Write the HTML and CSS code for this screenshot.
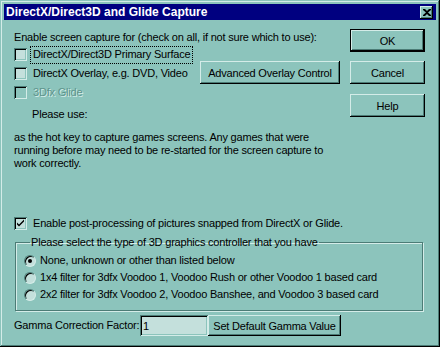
FILE: index.html
```html
<!DOCTYPE html>
<html>
<head>
	<title>DirectX/Direct3D and Glide Capture</title>
	<link rel="stylesheet" href="styles.css">
</head>
<body>
<div class="window">
    <div class="titlebar">
        <span class="title">DirectX/Direct3D and Glide Capture</span>
        <button class="close">
            <svg width="8" height="7" viewBox="0 0 8 7"><path d="M0 0h2l2 2 2-2h2v1l-3 2.5 3 2.5v1h-2l-2-2-2 2h-2v-1l3-2.5-3-2.5z" fill="#000"/></svg>
        </button>
    </div>

    <div class="content">
        <div class="top">
            <div class="main">
                <p class="intro">Enable screen capture for (check on all, if not sure which to use):</p>
                <div class="row">
                    <span class="box"></span>
                    <span class="label focus">DirectX/Direct3D Primary Surface</span>
                </div>
                <div class="row">
                    <span class="box"></span>
                    <span class="label">DirectX Overlay, e.g. DVD, Video</span>
                    <button class="btn advanced">Advanced Overlay Control</button>
                </div>
                <div class="row disabled">
                    <span class="box"></span>
                    <span class="label">3Dfx Glide</span>
                </div>
                <p class="hint">Please use:</p>
            </div>
            <div class="side">
                <button class="btn default">OK</button>
                <button class="btn">Cancel</button>
                <button class="btn help">Help</button>
            </div>
        </div>

        <p class="para">as the hot key to capture games screens. Any games that were<br>running before may need to be re-started for the screen capture to<br>work correctly.</p>

        <div class="row post">
            <span class="box">
                <svg width="9" height="9" viewBox="0 0 9 9"><path d="M1 3.5l2 2 5-5v2l-5 5-2-2z" fill="#000"/></svg>
            </span>
            <span class="label">Enable post-processing of pictures snapped from DirectX or Glide.</span>
        </div>

        <fieldset class="group">
            <legend>Please select the type of 3D graphics controller that you have</legend>
            <div class="radio-row">
                <span class="radio checked"><span class="dot"></span></span>
                <span class="label">None, unknown or other than listed below</span>
            </div>
            <div class="radio-row">
                <span class="radio"></span>
                <span class="label">1x4 filter for 3dfx Voodoo 1, Voodoo Rush or other Voodoo 1 based card</span>
            </div>
            <div class="radio-row">
                <span class="radio"></span>
                <span class="label">2x2 filter for 3dfx Voodoo 2, Voodoo Banshee, and Voodoo 3 based card</span>
            </div>
        </fieldset>

        <div class="gamma">
            <span class="gamma-label">Gamma Correction Factor:</span>
            <input class="field" type="text" value="1">
            <button class="btn gamma-btn">Set Default Gamma Value</button>
        </div>
    </div>
</div>
</body>
</html>
```

FILE: styles.css
```css
* {
	margin: 0;
	padding: 0;
	box-sizing: border-box;
}

body {
	font-family: "Liberation Sans", Arial, sans-serif;
	font-size: 11px;
	letter-spacing: -0.2px;
	line-height: 13px;
	color: #000;
	background: #8cc4bc;
	white-space: nowrap;
}

.window {
	width: 440px;
	height: 347px;
	padding: 4px;
	background: #8cc4bc;
	box-shadow: inset -1px -1px #000, inset 1px 1px #8cc4bc, inset -2px -2px #4c7c76, inset 2px 2px #d4ece8;
}

.titlebar {
	height: 16px;
	background: #000080;
	display: flex;
	align-items: center;
	justify-content: space-between;
	padding: 0 3px 0 2px;
}

.title {
	color: #fff;
	font-weight: bold;
	font-size: 12px;
	letter-spacing: 0;
}

.close {
	width: 13px;
	height: 13px;
	border: none;
	background: #8cc4bc;
	display: flex;
	align-items: center;
	justify-content: center;
	box-shadow: inset -1px -1px #000, inset 1px 1px #d4ece8, inset -2px -2px #4c7c76;
}

.content {
	padding: 9px 11px 0 10px;
}

.top {
	display: flex;
}

.main {
	flex: 1;
	padding-top: 2px;
	margin-right: 10px;
}

.intro {
	height: 14px;
}

.side {
	width: 75px;
	display: flex;
	flex-direction: column;
}

.btn {
	height: 23px;
	border: none;
	background: #8cc4bc;
	font-family: "Liberation Sans", Arial, sans-serif;
	font-size: 11px;
	letter-spacing: -0.2px;
	color: #000;
	box-shadow: inset -1px -1px #000, inset 1px 1px #d4ece8, inset -2px -2px #4c7c76;
}

.side .btn + .btn {
	margin-top: 9px;
}

.side .help {
	margin-top: 10px !important;
}

.btn.default {
	box-shadow: inset -1px -1px #000, inset 1px 1px #000, inset -2px -2px #000, inset 2px 2px #d4ece8, inset -3px -3px #4c7c76;
}

.row {
	height: 19px;
	display: flex;
	align-items: center;
}

.box {
	width: 13px;
	height: 13px;
	flex: none;
	background: #c4e0dc;
	display: flex;
	align-items: center;
	justify-content: center;
	box-shadow: inset 1px 1px #4c7c76, inset -1px -1px #d4ece8, inset 2px 2px #000, inset -2px -2px #8cc4bc;
}

.row .label {
	margin-left: 4px;
	padding: 1px 2px 2px 2px;
}

.label.focus {
	outline: 1px dotted #000;
}

.advanced {
	margin-left: auto;
	width: 140px;
	margin-top: -3px;
	margin-bottom: -1px;
}

.disabled .box {
	background: #8cc4bc;
}

.disabled .label {
	color: #5e948c;
	text-shadow: 1px 1px #d4ece8;
}

.hint {
	margin: 6px 0 0 18px;
}

.para {
	margin-top: 10px;
}

.post {
	margin-top: 44px;
}

.group {
	margin: 3px 2px 0 1px;
	border: 1px solid #4c7c76;
	box-shadow: 1px 1px #d4ece8, inset 1px 1px #d4ece8;
	padding: 3px 0 7px 8px;
}

.group legend {
	margin-left: 6px;
	padding: 0 1px;
}

.radio-row {
	height: 17px;
	display: flex;
	align-items: center;
}

.radio {
	width: 12px;
	height: 12px;
	border-radius: 50%;
	flex: none;
	background: #c4e0dc;
	border: 1px solid;
	border-color: #4c7c76 #d4ece8 #d4ece8 #4c7c76;
	box-shadow: inset 1px 1px #000;
	display: flex;
	align-items: center;
	justify-content: center;
}

.dot {
	width: 4px;
	height: 4px;
	border-radius: 50%;
	background: #000;
}

.radio-row .label {
	margin-left: 4px;
}

.gamma {
	display: flex;
	align-items: center;
	margin-top: 4px;
}

.gamma-label {
	width: 126px;
}

.field {
	width: 68px;
	height: 21px;
	border: none;
	background: #c4e0dc;
	font-family: "Liberation Sans", Arial, sans-serif;
	font-size: 11px;
	padding: 0 3px;
	box-shadow: inset 1px 1px #4c7c76, inset -1px -1px #d4ece8, inset 2px 2px #000, inset -2px -2px #8cc4bc;
}

.gamma-btn {
	width: 133px;
	height: 21px;
}
```
